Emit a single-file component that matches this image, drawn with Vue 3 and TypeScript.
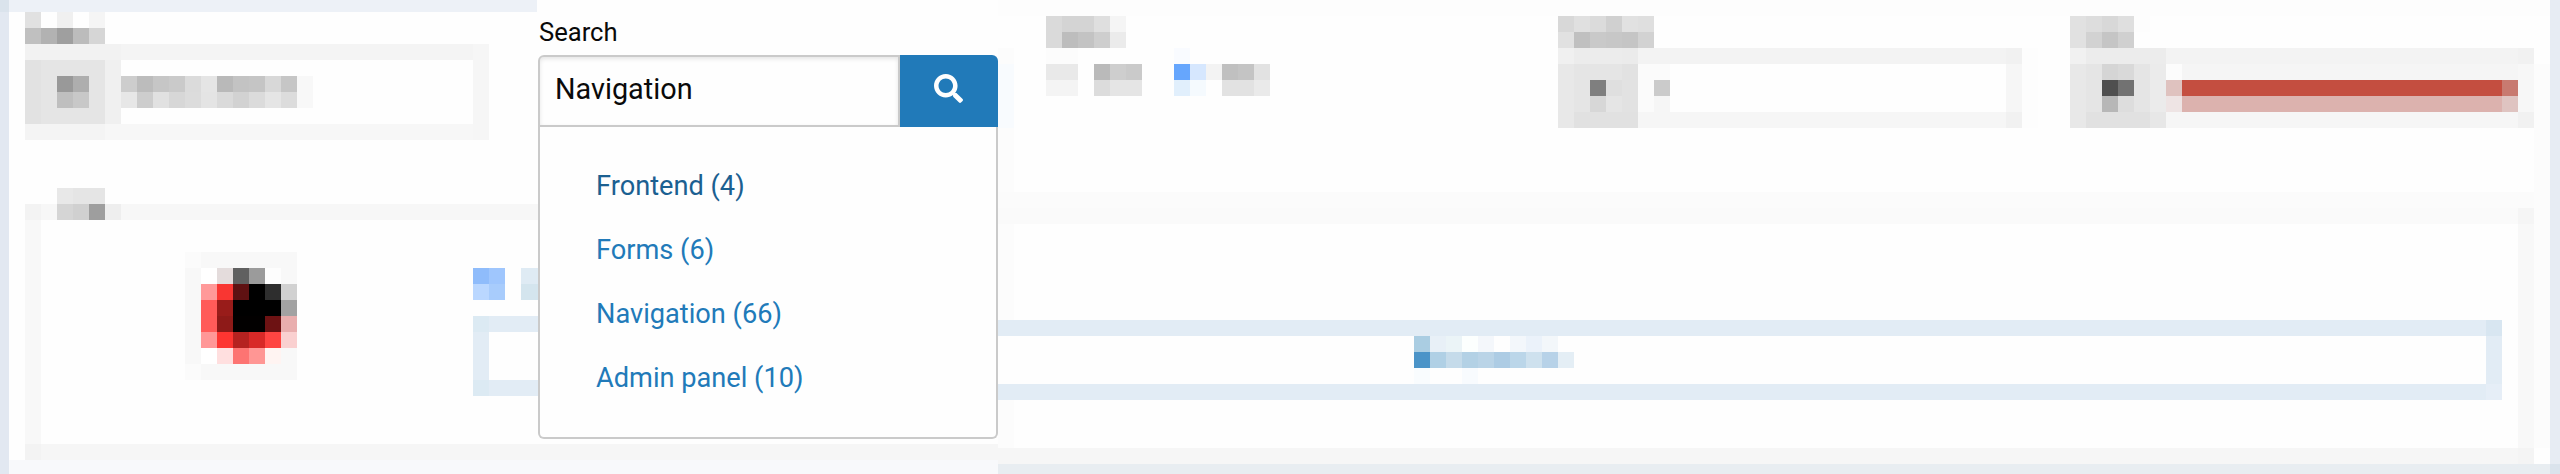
<script setup lang="ts">
import { ref } from 'vue'

// x, y, width, height (in 16px cells) and fill
type Cell = [number, number, number, number, string]

const left: Cell[] = [
  [-1, -1, 34, 1, '#edf1f7'], [-1, 0, 1, 29, '#e2e8f1'], [-1, -1, 1, 1, '#dae3ec'],
  [1, 0, 1, 1, '#e1e1e1'], [3, 0, 1, 1, '#f0f0f0'], [5, 0, 1, 1, '#f5f5f5'],
  [1, 1, 1, 1, '#c0c0c0'], [2, 1, 1, 1, '#b2b2b2'], [3, 1, 1, 1, '#9f9f9f'], [4, 1, 1, 1, '#bcbcbc'], [5, 1, 1, 1, '#d6d6d6'],
  [1, 2, 6, 1, '#f2f2f2'], [7, 2, 22, 1, '#f4f4f4'], [29, 2, 1, 6, '#f6f6f6'],
  [1, 3, 5, 4, '#e5e5e5'], [1, 3, 1, 4, '#e2e2e2'], [6, 3, 1, 4, '#f0f0f0'],
  [3, 4, 1, 1, '#999999'], [4, 4, 1, 1, '#aeaeae'], [3, 5, 1, 1, '#bfbfbf'], [4, 5, 1, 1, '#c8c8c8'],
  [1, 7, 5, 1, '#f4f4f4'], [6, 7, 23, 1, '#f7f7f7'],
  [7, 4, 1, 1, '#cdcdcd'], [8, 4, 1, 1, '#bcbcbc'], [9, 4, 1, 1, '#c6c6c6'], [10, 4, 1, 1, '#cacaca'], [11, 4, 1, 1, '#dbdbdb'], [12, 4, 1, 1, '#e5e5e5'],
  [13, 4, 1, 1, '#b9b9b9'], [14, 4, 1, 1, '#c3c3c3'], [15, 4, 1, 1, '#c5c5c5'], [16, 4, 1, 1, '#d8d8d8'], [17, 4, 1, 1, '#c6c6c6'], [18, 4, 1, 2, '#f8f8f8'],
  [7, 5, 1, 1, '#e7e7e7'], [8, 5, 1, 1, '#cdcdcd'], [9, 5, 1, 1, '#e1e1e1'], [10, 5, 1, 1, '#d7d7d7'], [11, 5, 1, 1, '#dcdcdc'], [12, 5, 1, 1, '#e4e4e4'],
  [13, 5, 1, 1, '#dadada'], [14, 5, 1, 1, '#d2d2d2'], [15, 5, 1, 1, '#dbdbdb'], [16, 5, 1, 1, '#e5e5e5'], [17, 5, 1, 1, '#dcdcdc'],
  [1, 12, 33, 1, '#f7f7f7'], [1, 12, 1, 1, '#f3f3f3'], [1, 13, 1, 14, '#f8f8f8'],
  [3, 11, 1, 1, '#e8e8e8'], [4, 11, 2, 1, '#e5e5e5'], [3, 12, 1, 1, '#d5d5d5'], [4, 12, 1, 1, '#d0d0d0'], [5, 12, 1, 1, '#9e9e9e'], [6, 12, 1, 1, '#eeeeee'],
  [11, 15, 7, 8, '#f8f8f8'], [11, 15, 1, 1, '#fbfbfb'], [11, 22, 1, 1, '#fbfbfb'],
  [12, 16, 1, 1, '#ffffff'], [13, 16, 1, 1, '#e4dcdc'], [14, 16, 1, 1, '#606060'], [15, 16, 1, 1, '#9b9b9b'], [16, 16, 1, 1, '#fdfdfd'],
  [12, 17, 1, 1, '#ff9999'], [13, 17, 1, 1, '#f93632'], [14, 17, 1, 1, '#5f1112'], [15, 17, 1, 1, '#000000'], [16, 17, 1, 1, '#2e2e2e'], [17, 17, 1, 1, '#d1d1d1'],
  [12, 18, 1, 2, '#ff5b59'], [13, 18, 1, 1, '#991c1a'], [14, 18, 3, 1, '#000000'], [17, 18, 1, 1, '#a2a2a2'],
  [13, 19, 1, 1, '#8e1a18'], [14, 19, 2, 1, '#020000'], [16, 19, 1, 1, '#6d1213'], [17, 19, 1, 1, '#e9aeae'],
  [12, 20, 1, 1, '#ff9797'], [13, 20, 1, 1, '#fd3531'], [14, 20, 1, 1, '#b52220'], [15, 20, 1, 1, '#d82927'], [16, 20, 1, 1, '#ff4542'], [17, 20, 1, 1, '#fad0d0'],
  [12, 21, 1, 1, '#ffffff'], [13, 21, 1, 1, '#ffdfdf'], [14, 21, 1, 1, '#fd7472'], [15, 21, 1, 1, '#ff9694'], [16, 21, 1, 1, '#fff4f2'],
  [29, 16, 1, 1, '#8fbcfb'], [30, 16, 1, 1, '#9fc6fd'], [29, 17, 1, 1, '#bad7ff'], [30, 17, 1, 1, '#a8ccfc'],
  [32, 16, 2, 1, '#dfebf4'], [32, 17, 2, 1, '#d4e5ee'],
  [29, 19, 5, 5, '#e2ecf5'], [29, 19, 1, 1, '#dceaf3'], [29, 23, 1, 1, '#dceaf3'], [30, 20, 4, 3, '#fefefe'],
  [1, 27, 33, 1, '#f6f6f6'], [1, 27, 1, 1, '#f3f3f3'], [0, 28, 34, 1, '#f8f9fb'],
]

const right: Cell[] = [
  [0, 0, 97, 1, '#fdfdfd'], [0, 3, 1, 25, '#fcfcfc'], [0, 4, 1, 4, '#f8fbfe'],
  [3, 1, 1, 2, '#dadada'], [4, 1, 2, 1, '#d4d4d4'], [6, 1, 1, 1, '#dfdfdf'], [7, 1, 1, 1, '#f5f5f5'],
  [4, 2, 1, 1, '#bdbdbd'], [5, 2, 1, 1, '#c3c3c3'], [6, 2, 1, 1, '#cecece'], [7, 2, 1, 1, '#ebebeb'],
  [3, 3, 2, 1, '#fcfcfc'], [3, 4, 2, 1, '#e9e9e9'], [3, 5, 2, 1, '#f4f4f4'],
  [6, 4, 1, 1, '#bababa'], [7, 4, 1, 1, '#cecece'], [8, 4, 1, 1, '#cacaca'], [6, 5, 1, 1, '#dcdcdc'], [7, 5, 2, 1, '#e5e5e5'],
  [11, 3, 1, 1, '#f9fbff'], [11, 4, 1, 1, '#66a6fd'], [12, 4, 1, 1, '#d6e7fe'], [13, 4, 1, 1, '#f3f3f3'], [11, 5, 1, 1, '#e1effc'], [12, 5, 1, 1, '#f5fafe'],
  [14, 4, 1, 1, '#c0c0c0'], [15, 4, 1, 1, '#c4c4c4'], [16, 4, 1, 1, '#e2e2e2'], [14, 5, 2, 1, '#e2e2e2'], [16, 5, 1, 1, '#eaeaea'],

  [35, 1, 1, 1, '#d8d8d8'], [36, 1, 1, 1, '#e0e0e0'], [37, 1, 1, 1, '#dbdbdb'], [38, 1, 1, 1, '#d0d0d0'], [39, 1, 1, 1, '#e1e1e1'], [40, 1, 1, 1, '#dfdfdf'],
  [35, 2, 1, 1, '#e1e1e1'], [36, 2, 1, 1, '#c0c0c0'], [37, 2, 1, 1, '#c9c9c9'], [38, 2, 1, 1, '#c7c7c7'], [39, 2, 1, 1, '#c5c5c5'], [40, 2, 1, 1, '#d2d2d2'],
  [35, 3, 1, 1, '#f0f0f0'], [36, 3, 3, 1, '#ececec'], [39, 3, 1, 1, '#ebebeb'], [40, 3, 23, 1, '#f3f3f3'], [63, 3, 1, 1, '#f1f1f1'], [64, 3, 1, 5, '#fdfdfd'],
  [35, 4, 1, 4, '#e8e8e8'], [36, 4, 3, 3, '#e5e5e5'], [39, 4, 1, 3, '#e2e2e2'], [36, 7, 4, 1, '#e1e1e1'],
  [37, 5, 1, 1, '#7f7f7f'], [38, 5, 1, 1, '#dfdfdf'], [37, 6, 1, 1, '#d7d7d7'], [40, 4, 2, 3, '#fbfbfb'], [41, 5, 1, 1, '#cbcbcb'], [41, 6, 1, 1, '#f6f6f6'],
  [40, 7, 23, 1, '#f6f6f6'], [63, 4, 1, 3, '#f6f6f6'], [63, 7, 1, 1, '#f1f1f1'],

  [67, 1, 1, 2, '#e1e1e1'], [68, 1, 1, 1, '#dddddd'], [69, 1, 1, 1, '#d8d8d8'], [70, 1, 1, 1, '#dfdfdf'], [71, 1, 1, 1, '#fdfdfd'],
  [68, 2, 1, 1, '#d2d2d2'], [69, 2, 1, 1, '#c5c5c5'], [70, 2, 1, 1, '#d0d0d0'],
  [67, 3, 1, 1, '#f1f1f1'], [68, 3, 5, 1, '#ececec'], [73, 3, 22, 1, '#f3f3f3'], [95, 3, 1, 1, '#f1f1f1'],
  [67, 4, 1, 4, '#e8e8e8'], [68, 4, 4, 3, '#e5e5e5'], [72, 4, 1, 3, '#ebebeb'], [68, 7, 4, 1, '#e1e1e1'], [72, 7, 1, 1, '#e7e7e7'],
  [69, 4, 1, 1, '#d5d5d5'], [70, 4, 1, 1, '#d9d9d9'], [69, 5, 1, 1, '#4f4f4f'], [70, 5, 1, 1, '#727272'], [69, 6, 1, 1, '#b7b7b7'], [70, 6, 1, 1, '#dddddd'],
  [73, 4, 1, 1, '#fcfcfc'], [74, 4, 21, 1, '#f5f5f5'], [95, 4, 1, 3, '#f7f7f7'], [96, 4, 1, 24, '#fcfcfc'],
  [73, 5, 1, 1, '#dfc2bf'], [74, 5, 20, 1, '#c44e40'], [94, 5, 1, 1, '#c87a70'],
  [73, 6, 1, 1, '#eee4e4'], [74, 6, 20, 1, '#dcb2ae'], [94, 6, 1, 1, '#dfc4c1'],
  [73, 7, 22, 1, '#f6f6f6'], [95, 7, 1, 1, '#f1f1f1'],

  [0, 12, 96, 1, '#fbfbfb'], [0, 13, 96, 1, '#fafafa'], [95, 13, 1, 1, '#f5f5f5'], [95, 14, 1, 14, '#f8f8f8'],
  [0, 20, 94, 5, '#e2ecf5'], [0, 21, 93, 3, '#fefefe'], [93, 20, 1, 1, '#d8e6f1'], [93, 24, 1, 1, '#e6eef7'],
  [26, 21, 1, 1, '#aacde2'], [27, 21, 1, 1, '#e8f0f7'], [28, 21, 1, 1, '#ebf4f7'], [29, 21, 1, 1, '#fcfffe'], [30, 21, 1, 1, '#f4f7fb'], [32, 21, 1, 1, '#f3f7fb'], [33, 21, 1, 1, '#ebf2fa'], [34, 21, 1, 1, '#f3f7fa'],
  [26, 22, 1, 1, '#4b94c8'], [27, 22, 1, 1, '#b0d0e5'], [28, 22, 1, 1, '#c5dbea'], [29, 22, 1, 1, '#b3d1e5'], [30, 22, 1, 1, '#bad4e7'], [31, 22, 1, 1, '#adcce4'], [32, 22, 1, 1, '#bbd6e9'], [33, 22, 1, 1, '#cee1ee'], [34, 22, 1, 1, '#b7d2e8'], [35, 22, 1, 1, '#e4eef5'],
  [26, 23, 1, 1, '#f9fcfe'], [29, 23, 1, 1, '#f8fbfe'],
  [0, 28, 96, 1, '#f6f6f6'], [95, 28, 1, 1, '#f4f4f4'], [0, 29, 97, 1, '#e8edf1'], [97, 0, 1, 30, '#e7ecf3'], [97, 29, 1, 1, '#dae3ec'],
]

const query = ref('Navigation')
const results = [
  { name: 'Frontend', count: 4 },
  { name: 'Forms', count: 6 },
  { name: 'Navigation', count: 66 },
  { name: 'Admin panel', count: 10 },
]
</script>

<template>
  <main class="page">
    <svg class="mosaic" width="538" height="474" viewBox="0 0 538 474" aria-hidden="true">
      <rect v-for="(c, i) in left" :key="i" :x="9 + c[0] * 16" :y="12 + c[1] * 16" :width="c[2] * 16" :height="c[3] * 16" :fill="c[4]" />
    </svg>

    <section class="search">
      <label class="label" for="query">Search</label>
      <div class="bar">
        <input id="query" v-model="query" class="field" type="text" />
        <button class="go" type="button" aria-label="Search">
          <svg width="29" height="29" viewBox="0 0 512 512" fill="#fefefe">
            <path d="M505 442.7L405.3 343c-4.5-4.5-10.6-7-17-7H372c27.6-35.3 44-79.7 44-128C416 93.1 322.9 0 208 0S0 93.1 0 208s93.1 208 208 208c48.3 0 92.7-16.4 128-44v16.3c0 6.4 2.5 12.5 7 17l99.7 99.7c9.4 9.4 24.6 9.4 33.9 0l28.3-28.3c9.4-9.4 9.4-24.6.1-34zM208 336c-70.7 0-128-57.2-128-128 0-70.7 57.2-128 128-128 70.7 0 128 57.2 128 128 0 70.7-57.2 128-128 128z" />
          </svg>
        </button>
      </div>
      <ul class="results">
        <li v-for="(r, i) in results" :key="r.name">
          <a class="link" :class="{ active: i === 0 }">{{ r.name }} ({{ r.count }})</a>
        </li>
      </ul>
      <div class="edge"></div>
      <div class="ground"></div>
    </section>

    <svg class="mosaic" width="1562" height="474" viewBox="0 0 1562 474" aria-hidden="true">
      <rect v-for="(c, i) in right" :key="i" :x="c[0] * 16" :y="c[1] * 16" :width="c[2] * 16" :height="c[3] * 16" :fill="c[4]" />
    </svg>
  </main>
</template>

<style scoped>
.page {
  display: grid;
  grid-template-columns: 538px 460px 1562px;
  width: 2560px;
  height: 474px;
  overflow: hidden;
  background: #fefefe;
  font-family: Roboto, "Liberation Sans", sans-serif;
}

.mosaic {
  display: block;
  shape-rendering: crispEdges;
}

.search {
  display: flex;
  flex-direction: column;
  height: 474px;
}

.label {
  box-sizing: border-box;
  height: 55px;
  padding: 9px 0 0 1px;
  font-size: 25.6px;
  line-height: 46px;
  color: #0a0a0a;
}

.bar {
  display: flex;
  height: 72px;
}

.field {
  box-sizing: border-box;
  width: 362px;
  height: 72px;
  margin: 0;
  padding: 0 15px 4px;
  border: 2px solid #cacaca;
  border-radius: 6px 0 0 0;
  outline: none;
  background: #fefefe;
  box-shadow: inset 0 2px 4px rgba(10, 10, 10, 0.1);
  font-family: inherit;
  font-size: 28.8px;
  color: #0a0a0a;
}

.go {
  display: flex;
  align-items: center;
  justify-content: center;
  width: 98px;
  height: 72px;
  margin: 0;
  padding: 0 2px 6px 0;
  border: 0;
  border-radius: 0 6px 0 0;
  background: #217ab9;
}

.results {
  box-sizing: border-box;
  height: 312px;
  margin: 0;
  padding: 27px 0 0 56px;
  border: 2px solid #cacaca;
  border-top: 0;
  border-radius: 0 0 6px 6px;
  background: #fefefe;
  list-style: none;
}

.results li {
  height: 64px;
}

.link {
  font-size: 27.2px;
  line-height: 64px;
  color: #217ab9;
}

.link.active {
  color: #1b6091;
}

.edge {
  height: 16px;
  margin-top: 5px;
  background: #f6f6f6;
}

.ground {
  height: 14px;
  background: #f8f9fb;
}
</style>

<style>
body {
  margin: 0;
}
</style>
